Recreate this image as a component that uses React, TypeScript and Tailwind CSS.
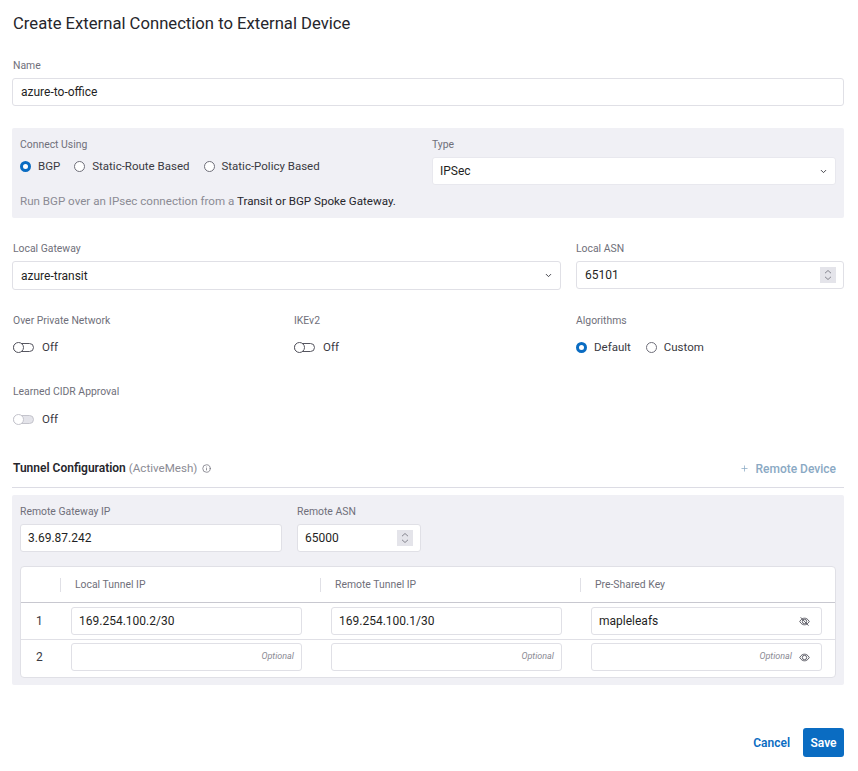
import React from "react";
import { ChevronDown, Info, Plus } from "lucide-react";

const Label = ({ children, className = "" }: { children: React.ReactNode; className?: string }) => (
  <div className={`h-[14px] text-[10.4px] leading-[16px] text-[#6f6f7a] ${className}`}>{children}</div>
);

const Field = ({ value, extra, tight, className = "" }: { value?: string; extra?: React.ReactNode; tight?: boolean; className?: string }) => (
  <div className={`flex h-[28px] items-center justify-between rounded-[3px] border border-[#e0e0e6] bg-white pr-[7px] text-[12px] text-[#1f1f24] ${tight ? "pl-[7px]" : "pl-2"} ${className}`}>
    <span>{value}</span>
    {extra}
  </div>
);

const Stepper = () => (
  <span className="flex h-[16px] w-[16px] items-center justify-center bg-[#e4e4ea]">
    <svg width="10" height="12" viewBox="0 0 10 12" fill="none" stroke="#7a7a84" strokeWidth="0.9">
      <path d="M2 4.2 5 1.5 8 4.2" />
      <path d="M2 7.8 5 10.5 8 7.8" />
    </svg>
  </span>
);

const EyeIcon = ({ off }: { off?: boolean }) => (
  <svg width="11" height="11" viewBox="0 0 12 12" fill="none" stroke="#55555f" strokeWidth="1" className="mr-[4px]">
    <path d="M0.8 6C2.6 3 4.2 2.4 6 2.4S9.4 3 11.2 6C9.4 9 7.8 9.6 6 9.6S2.6 9 0.8 6Z" />
    <circle cx="6" cy="6" r="2.4" />
    {off && <path d="M1.8 1.4 10.4 10.6" />}
  </svg>
);

const Radio = ({ label, checked }: { label: string; checked?: boolean }) => (
  <div className="flex items-center gap-[7px] text-[11.5px] leading-[16px] text-[#3a3a42]">
    {checked ? (
      <span className="h-[11px] w-[11px] rounded-full border-[3px] border-[#0a6cc2] bg-white" />
    ) : (
      <span className="h-[11px] w-[11px] rounded-full border border-[#6f6f7a] bg-white" />
    )}
    {label}
  </div>
);

const Toggle = ({ disabled }: { disabled?: boolean }) => (
  <div className="flex items-center gap-2 text-[11.5px] leading-[16px] text-[#3a3a42]">
    <span className={`flex h-[9px] w-[21px] items-center rounded-full border ${disabled ? "border-[#c4c4cc] bg-[#e4e4ea]" : "border-[#55555f] bg-white"}`}>
      <span className={`-ml-px h-[11px] w-[11px] rounded-full border bg-white ${disabled ? "border-[#c4c4cc]" : "border-[#55555f]"}`} />
    </span>
    Off
  </div>
);

const Optional = () => <span className="text-[9px] italic text-[#8b8b94]">Optional</span>;

const rows = [
  { n: "1", local: "169.254.100.2/30", remote: "169.254.100.1/30", key: "mapleleafs" },
  { n: "2", local: "", remote: "", key: "" },
];

export default function App() {
  return (
    <div className="min-h-[771px] bg-white pl-3 pr-[14px] font-['Roboto',sans-serif]">
      <h1 className="pt-[13px] pl-px text-[16.65px] leading-[22px] font-normal text-[#26262c]">
        Create External Connection to External Device
      </h1>

      <Label className="mt-[23px] ml-px">Name</Label>
      <Field value="azure-to-office" className="mt-[6px]" />

      {/* connection type */}
      <div className="mt-[22px] flex h-[90px] rounded-[2px] bg-[#f0f0f5] px-2 pt-[9px]">
        <div className="w-[412px]">
          <Label>Connect Using</Label>
          <div className="mt-[7px] flex gap-[14px]">
            <Radio label="BGP" checked />
            <Radio label="Static-Route Based" />
            <Radio label="Static-Policy Based" />
          </div>
          <p className="mt-[19px] text-[11.6px] leading-[16px] text-[#8b8b94]">
            Run BGP over an IPsec connection from a <span className="text-[#26262c]">Transit or BGP Spoke Gateway.</span>
          </p>
        </div>
        <div className="flex-1">
          <Label>Type</Label>
          <Field value="IPSec" tight className="mt-[6px] border-[#e8e8ee]" extra={<ChevronDown size={9} strokeWidth={2.5} className="text-[#3a3a42]" />} />
        </div>
      </div>

      {/* gateway */}
      <div className="mt-[23px] grid grid-cols-[549px_268px] gap-x-[15px]">
        <div>
          <Label className="ml-px">Local Gateway</Label>
          <Field value="azure-transit" className="mt-[6px] h-[29px]" extra={<ChevronDown size={9} strokeWidth={2.5} className="text-[#3a3a42]" />} />
        </div>
        <div>
          <Label>Local ASN</Label>
          <Field value="65101" className="mt-[6px]" extra={<Stepper />} />
        </div>
      </div>

      <div className="mt-[23px] grid grid-cols-[281px_282px_1fr] pl-px">
        <div>
          <Label>Over Private Network</Label>
          <div className="mt-[12px]"><Toggle /></div>
        </div>
        <div>
          <Label>IKEv2</Label>
          <div className="mt-[12px]"><Toggle /></div>
        </div>
        <div>
          <Label>Algorithms</Label>
          <div className="mt-[12px] flex gap-[15px]">
            <Radio label="Default" checked />
            <Radio label="Custom" />
          </div>
        </div>
      </div>

      <div className="mt-[29px] pl-px">
        <Label>Learned CIDR Approval</Label>
        <div className="mt-[13px]"><Toggle disabled /></div>
      </div>

      {/* tunnel configuration */}
      <div className="mt-[29px] flex h-[32px] items-center justify-between border-b border-[#dcdce4] pb-[6px] pl-px pr-2">
        <div className="flex items-center gap-[5px] text-[12px]">
          <span className="font-semibold text-[#26262c]">
            Tunnel Configuration <span className="text-[11.6px] font-normal text-[#8b8b94]">(ActiveMesh)</span>
          </span>
          <Info size={9} className="text-[#6f6f7a]" />
        </div>
        <div className="flex items-center gap-[6px] text-[12px] font-medium text-[#8aa9c4]">
          <Plus size={9} />
          Remote Device
        </div>
      </div>

      <div className="mt-[7px] rounded-[2px] bg-[#f0f0f5] px-2 pt-[9px] pb-[7px]">
        <div className="flex gap-[15px]">
          <div className="w-[262px]">
            <Label>Remote Gateway IP</Label>
            <Field value="3.69.87.242" tight className="mt-[6px]" />
          </div>
          <div className="w-[124px]">
            <Label>Remote ASN</Label>
            <Field value="65000" tight className="mt-[6px]" extra={<Stepper />} />
          </div>
        </div>

        <div className="mt-[14px] rounded-[4px] border border-[#e0e0e6] bg-white">
          <div className="grid h-[36px] grid-cols-[39px_260px_260px_1fr] items-center border-b border-[#c8c8d0] text-[10.4px] text-[#6f6f7a]">
            <div />
            <div className="h-[14px] border-l border-[#e0e0e6] pl-[14px] leading-[14px]">Local Tunnel IP</div>
            <div className="h-[14px] border-l border-[#e0e0e6] pl-[14px] leading-[14px]">Remote Tunnel IP</div>
            <div className="h-[14px] border-l border-[#e0e0e6] pl-[14px] leading-[14px]">Pre-Shared Key</div>
          </div>
          {rows.map((r, i) => (
            <div
              key={r.n}
              className={`grid grid-cols-[21px_231px_231px_231px] gap-x-[29px] pr-[13px] ${i === 0 ? "border-b border-[#e0e0e6] py-[4px]" : "pt-[3px] pb-[6px]"}`}
            >
              <div className="flex items-center pl-[15px] text-[12px] text-[#3a3a42]">{r.n}</div>
              <Field value={r.local} tight extra={r.local ? undefined : <Optional />} />
              <Field value={r.remote} tight extra={r.remote ? undefined : <Optional />} />
              <Field
                value={r.key}
                tight
                extra={
                  r.key ? (
                    <EyeIcon off />
                  ) : (
                    <span className="flex items-center gap-[7px]">
                      <Optional />
                      <EyeIcon />
                    </span>
                  )
                }
              />
            </div>
          ))}
        </div>
      </div>

      {/* footer */}
      <div className="mt-[43px] flex items-center justify-end gap-[13px] text-[12px] font-semibold">
        <span className="text-[#0a6cc2]">Cancel</span>
        <button className="h-[29px] w-[41px] rounded-[3px] bg-[#0a6cc2] text-white">Save</button>
      </div>
    </div>
  );
}
